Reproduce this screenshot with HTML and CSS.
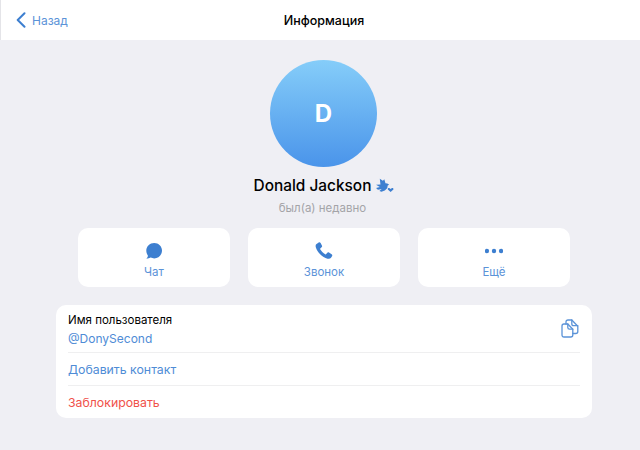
FILE: index.html
```html
<!DOCTYPE html>
<html>

<head>
	<meta charset="utf-8">
	<title>Информация</title>
	<link rel="stylesheet" href="styles.css">
</head>

<body>
	<div class="topbar">
		<a class="back">
			<svg class="back-icon" width="10" height="16" viewBox="0 0 10 16"><path d="M8.5 1.2 1.7 8l6.8 6.8" fill="none" stroke="#3d7fd0" stroke-width="2" stroke-linecap="round" stroke-linejoin="round"/></svg>
			<span>Назад</span>
		</a>
		<div class="title">Информация</div>
	</div>

	<div class="main">
		<div class="profile">
			<div class="avatar">D</div>
			<div class="name">
				<span>Donald Jackson</span>
				<svg width="19" height="16" viewBox="0 0 20 17">
					<path d="M5 .8 8.300 3 9.800 1.200 11 5.500 13 5.800 15 7.200 13.400 8 12.900 10.800 10.300 13.200 6.800 14.500 4.600 13.800 7 11.800 3 12.600 1 10.600 5 9.600 1 7.300 5.700 6.800Z" fill="#3d7fd0"/>
					<path d="M16.500 14.800 13.800 12.600C12.800 11.500 14.300 10.200 15.400 11L16.500 11.800 17.600 11C18.700 10.200 20.200 11.500 19.200 12.600Z" fill="#3d7fd0"/>
				</svg>
			</div>
			<div class="status">был(а) недавно</div>
		</div>

		<div class="actions">
			<div class="action">
				<svg width="18" height="18" viewBox="0 0 18 18"><path d="M9.2 1C13.600 1 17 4.400 17 8.600S13.600 16.400 9.200 16.400C7.900 16.400 6.800 16.100 5.700 15.600 4.500 16.300 3.100 16.700 1.400 16.700 2.300 15.800 2.900 14.800 3 13.800 1.900 12.400 1.300 10.600 1.300 8.600 1.300 4.400 4.800 1 9.200 1Z" fill="#3d7fd0"/></svg>
				<span>Чат</span>
			</div>
			<div class="action">
				<svg width="18" height="18" viewBox="0 0 18 18"><path d="M3.400.7 1.500 1.900C.6 2.600.4 3.800.8 5.200 1.600 7.800 3.200 10.300 5.200 12.300 7.200 14.300 9.800 16 12.500 16.700 14 17.100 15.300 16.800 16 15.800L17 14.300C17.500 13.600 17.300 12.800 16.600 12.300L14 10.600C13.300 10.200 12.600 10.300 12.100 10.900L11 12.200C10.800 12.400 10.500 12.500 10.200 12.300 9.200 11.700 8.200 10.900 7.300 10 6.400 9.100 5.700 8.200 5.200 7.300 5 7 5.100 6.700 5.300 6.500L6.600 5.300C7.200 4.800 7.300 4.100 6.900 3.400L5.600 1.100C5.100.3 4.200.1 3.400.7Z" fill="#3d7fd0"/></svg>
				<span>Звонок</span>
			</div>
			<div class="action">
				<svg width="18" height="18" viewBox="0 0 18 18"><circle cx="1.900" cy="9" r="2.200" fill="#3d7fd0"/><circle cx="9" cy="9" r="2.200" fill="#3d7fd0"/><circle cx="16.100" cy="9" r="2.200" fill="#3d7fd0"/></svg>
				<span>Ещё</span>
			</div>
		</div>

		<div class="panel">
			<div class="row row-user">
				<div>
					<div class="label">Имя пользователя</div>
					<div class="link">@DonySecond</div>
				</div>
				<svg class="copy" width="18" height="19" viewBox="0 0 18 19" fill="none" stroke="#5b93d8" stroke-width="1.300" stroke-linejoin="round" stroke-linecap="round">
					<path d="M1 7C1 5.700 1.700 5 3 5H6.800L11.800 10.200V16C11.800 17.300 11.100 18 9.800 18H3C1.700 18 1 17.300 1 16Z"/>
					<path d="M6.800 5V8.500C6.800 9.600 7.400 10.200 8.500 10.200H11.800"/>
					<path d="M5 5V3C5 1.700 5.700 1 7 1H10.800L16.800 7.200V12.500C16.800 13.800 16.100 14.500 14.800 14.500H11.800"/>
					<path d="M10.800 1V5C10.800 6.100 11.400 6.700 12.500 6.700H16.800"/>
				</svg>
			</div>
			<div class="row"><span class="link">Добавить контакт</span></div>
			<div class="row"><span class="danger">Заблокировать</span></div>
		</div>
	</div>
</body>

</html>
```

FILE: styles.css
```css
html,
body {
	margin: 0;
	height: 100%;
}

body {
	background: #efeff4;
	color: #000;
	font-family: Inter, "Liberation Sans", sans-serif;
	overflow: hidden;
}

.topbar {
	display: flex;
	align-items: center;
	justify-content: center;
	position: relative;
	height: 40px;
	padding-left: 7px;
	background: #fff;
	border-left: 1px solid #e4e4e8;
}

.back {
	display: flex;
	align-items: center;
	gap: 6px;
	position: absolute;
	left: 15px;
	top: 12px;
	color: #5b93d8;
	font-size: 12px;
}

.title {
	font-size: 12.500px;
	font-weight: 500;
}

.main {
	padding: 0 48px 0 56px;
}

.profile {
	display: flex;
	flex-direction: column;
	align-items: center;
	padding-top: 20px;
}

.avatar {
	display: flex;
	align-items: center;
	justify-content: center;
	width: 107px;
	height: 107px;
	margin-right: 1px;
	border-radius: 50%;
	background: linear-gradient(#85cdf9, #4a94ea);
	color: #fff;
	font-size: 24px;
	font-weight: 700;
}

.name {
	display: flex;
	align-items: center;
	gap: 4px;
	margin-top: 8px;
	height: 21px;
	font-size: 15.400px;
	font-weight: 500;
}

.status {
	margin-top: 5px;
	margin-right: 3px;
	color: #a4a4a8;
	font-size: 11.500px;
	line-height: 14px;
}

.actions {
	display: flex;
	justify-content: center;
	gap: 18px;
	margin-top: 13px;
}

.action {
	display: flex;
	flex-direction: column;
	align-items: center;
	width: 152px;
	height: 59px;
	box-sizing: border-box;
	padding-top: 14px;
	gap: 5px;
	background: #fff;
	border-radius: 10px;
	color: #5b93d8;
	font-size: 11.500px;
	line-height: 14px;
}

.panel {
	margin-top: 18px;
	padding: 0 12px;
	background: #fff;
	border-radius: 10px;
}

.row {
	display: flex;
	align-items: center;
	height: 32px;
	font-size: 12.300px;
	border-top: 1px solid #efeff0;
}

.row:first-child {
	border-top: 0;
}

.row-user {
	justify-content: space-between;
	height: 47px;
}

.label {
	line-height: 16px;
	font-size: 11.500px;
	margin-top: 2px;
}

.row-user .link {
	font-size: 12px;
	line-height: 17px;
	margin-top: 2px;
}

.link {
	color: #4f8cd6;
}

.danger {
	color: #f0514a;
}

.copy {
	margin-top: -1px;
	margin-right: 1px;
}
```
